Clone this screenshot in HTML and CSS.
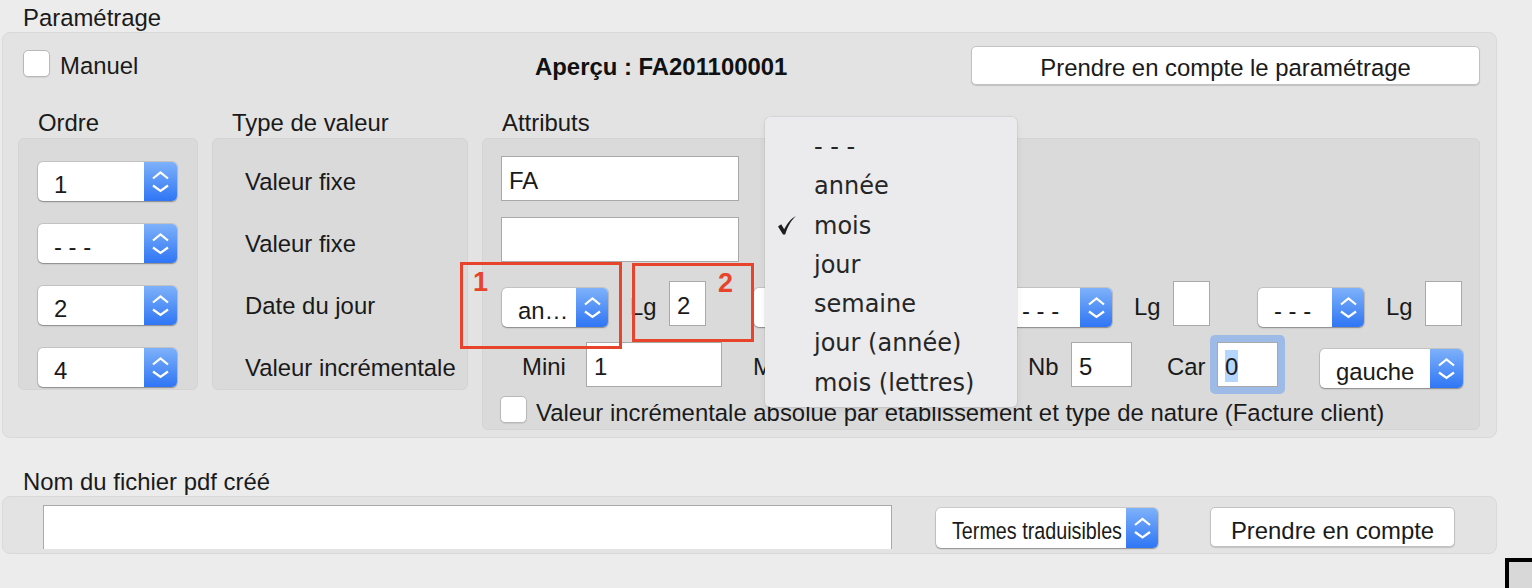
FILE: index.html
```html
<!DOCTYPE html>
<html lang="fr">
<head>
    <meta charset="UTF-8">
    <title>Paramétrage de la numérotation</title>
    <link rel="stylesheet" href="styles.css">
</head>
<body>
    <div class="section-title">Paramétrage</div>
    <div class="panel settings">
        <div class="top-row">
            <div class="check-line top-check">
                <span class="checkbox"></span>
                <span class="check-text">Manuel</span>
            </div>
            <div class="preview">Aperçu : FA201100001</div>
            <button class="btn btn-wide">Prendre en compte le paramétrage</button>
        </div>

        <div class="columns">
            <div class="col">
                <div class="col-title">Ordre</div>
                <div class="box box-order">
                    <div class="select sel-order"><span class="select-value">1</span><span class="select-arrows"><svg viewBox="0 0 33 39"><path d="M9 16.5 L16.5 10.5 L24 16.5 M9 23.5 L16.5 29 L24 23.5"/></svg></span></div>
                    <div class="select sel-order"><span class="select-value">- - -</span><span class="select-arrows"><svg viewBox="0 0 33 39"><path d="M9 16.5 L16.5 10.5 L24 16.5 M9 23.5 L16.5 29 L24 23.5"/></svg></span></div>
                    <div class="select sel-order"><span class="select-value">2</span><span class="select-arrows"><svg viewBox="0 0 33 39"><path d="M9 16.5 L16.5 10.5 L24 16.5 M9 23.5 L16.5 29 L24 23.5"/></svg></span></div>
                    <div class="select sel-order"><span class="select-value">4</span><span class="select-arrows"><svg viewBox="0 0 33 39"><path d="M9 16.5 L16.5 10.5 L24 16.5 M9 23.5 L16.5 29 L24 23.5"/></svg></span></div>
                </div>
            </div>

            <div class="col">
                <div class="col-title">Type de valeur</div>
                <div class="box box-type">
                    <div class="type-label">Valeur fixe</div>
                    <div class="type-label">Valeur fixe</div>
                    <div class="type-label">Date du jour</div>
                    <div class="type-label">Valeur incrémentale</div>
                </div>
            </div>

            <div class="col">
                <div class="col-title">Attributs</div>
                <div class="box box-attr">
                    <div class="field field-wide first">FA</div>
                    <div class="field field-wide second"></div>

                    <div class="attr-row date-row">
                        <div class="len-group first-group">
                            <div class="select sel-date"><span class="select-value">an…</span><span class="select-arrows"><svg viewBox="0 0 33 39"><path d="M9 16.5 L16.5 10.5 L24 16.5 M9 23.5 L16.5 29 L24 23.5"/></svg></span></div>
                            <span class="lbl lg">Lg</span>
                            <div class="field field-len">2</div>
                        </div>
                        <!-- this one is open: its menu is drawn over it -->
                        <div class="len-group">
                            <div class="select sel-date"><span class="select-value"></span><span class="select-arrows"><svg viewBox="0 0 33 39"><path d="M9 16.5 L16.5 10.5 L24 16.5 M9 23.5 L16.5 29 L24 23.5"/></svg></span></div>
                            <span class="lbl lg"></span>
                            <div class="field field-len"></div>
                        </div>
                        <div class="len-group">
                            <div class="select sel-date"><span class="select-value">- - -</span><span class="select-arrows"><svg viewBox="0 0 33 39"><path d="M9 16.5 L16.5 10.5 L24 16.5 M9 23.5 L16.5 29 L24 23.5"/></svg></span></div>
                            <span class="lbl lg">Lg</span>
                            <div class="field field-len"></div>
                        </div>
                        <div class="len-group">
                            <div class="select sel-date"><span class="select-value">- - -</span><span class="select-arrows"><svg viewBox="0 0 33 39"><path d="M9 16.5 L16.5 10.5 L24 16.5 M9 23.5 L16.5 29 L24 23.5"/></svg></span></div>
                            <span class="lbl lg">Lg</span>
                            <div class="field field-len"></div>
                        </div>
                    </div>

                    <div class="attr-row incr-row">
                        <span class="lbl lbl-mini">Mini</span>
                        <div class="field field-num">1</div>
                        <span class="lbl lbl-maxi">Maxi</span>
                        <div class="field field-num"></div>
                        <span class="lbl lbl-nb">Nb</span>
                        <div class="field field-small">5</div>
                        <span class="lbl lbl-car">Car</span>
                        <div class="focus-ring">
                            <div class="field field-small"><span class="text-selected">0</span></div>
                        </div>
                        <div class="select sel-align"><span class="select-value">gauche</span><span class="select-arrows"><svg viewBox="0 0 33 39"><path d="M9 16.5 L16.5 10.5 L24 16.5 M9 23.5 L16.5 29 L24 23.5"/></svg></span></div>
                    </div>

                    <div class="check-line attr-check">
                        <span class="checkbox"></span>
                        <span class="check-text">Valeur incrémentale absolue par établissement et type de nature (Facture client)</span>
                    </div>
                </div>
            </div>
        </div>

        <!-- open menu of the second date select -->
        <div class="popup">
            <div class="popup-item">- - -</div>
            <div class="popup-item">année</div>
            <div class="popup-item checked">
                <svg class="check-mark" viewBox="0 0 18 19"><path d="M0 10.5 L3.2 8.3 L6.2 13.3 C9 7.5 13 2.5 18 0 C13.5 4 9.8 10 7.2 18.5 L5 18.5 Z"/></svg>
                mois
            </div>
            <div class="popup-item">jour</div>
            <div class="popup-item">semaine</div>
            <div class="popup-item">jour (année)</div>
            <div class="popup-item">mois (lettres)</div>
        </div>

        <div class="mark mark-1"><span class="mark-num">1</span></div>
        <div class="mark mark-2"><span class="mark-num">2</span></div>
    </div>

    <div class="section-title second-title">Nom du fichier pdf créé</div>
    <div class="panel files">
        <div class="field file-name"></div>
        <div class="select sel-terms"><span class="select-value"><span class="squeeze">Termes traduisibles</span></span><span class="select-arrows"><svg viewBox="0 0 33 39"><path d="M9 16.5 L16.5 10.5 L24 16.5 M9 23.5 L16.5 29 L24 23.5"/></svg></span></div>
        <button class="btn btn-apply">Prendre en compte</button>
    </div>

    <div class="corner"></div>
</body>
</html>
```

FILE: styles.css
```css
body {
    margin: 0;
    width: 1532px;
    height: 588px;
    overflow: hidden;
    background-color: #ececec;
    font-family: "Liberation Sans", Arial, sans-serif;
    font-size: 23.9px;
    color: #1a1a1a;
}
.section-title {
    height: 27px;
    padding: 5px 0 0 23px;
    line-height: 26px;
}
.second-title {
    margin-top: 26px;
}
.panel {
    position: relative;
    box-sizing: border-box;
    width: 1495px;
    margin-left: 2px;
    background-color: #e3e3e3;
    border: 1px solid #d9d9d9;
    border-radius: 8px;
}
.settings {
    height: 406px;
}

/* top line: manual checkbox, preview, apply button */
.top-row {
    display: grid;
    grid-template-columns: 512px 436px 509px;
    height: 52px;
    padding: 0 16px 0 20px;
}
.check-line {
    display: flex;
    align-items: flex-start;
}
.checkbox {
    flex: none;
    box-sizing: border-box;
    width: 27px;
    height: 27px;
    background-color: white;
    border: 1px solid #b8b8b8;
    border-radius: 5px;
    box-shadow: 0 1px 1px rgba(0, 0, 0, 0.08);
}
.check-text {
    line-height: 26px;
    white-space: nowrap;
}
.top-check .checkbox {
    margin-top: 17px;
}
.top-check .check-text {
    margin: 20px 0 0 10px;
}
.preview {
    margin-top: 21px;
    line-height: 26px;
    font-weight: bold;
    color: #111;
}
.btn {
    box-sizing: border-box;
    background-color: white;
    border: 1px solid #c2c2c2;
    border-radius: 5px;
    box-shadow: 0 1px 1px rgba(0, 0, 0, 0.15);
    font: inherit;
    color: inherit;
    text-align: center;
    line-height: 26px;
    padding: 0;
}
.btn-wide {
    height: 39px;
    margin-top: 13px;
    padding-top: 5px;
}

/* three columns */
.columns {
    display: flex;
    gap: 14px;
    margin-top: 25px;
    padding-left: 15px;
}
.col-title {
    height: 28px;
    padding-left: 20px;
    line-height: 26px;
}
.box {
    box-sizing: border-box;
    background-color: #dadada;
    border: 1px solid #d4d4d4;
    border-radius: 6px;
    overflow: hidden;
}
.box-order {
    display: flex;
    flex-direction: column;
    gap: 23px;
    width: 180px;
    height: 252px;
    padding: 23px 0 0 19px;
}
.box-type {
    display: flex;
    flex-direction: column;
    gap: 23px;
    width: 256px;
    height: 252px;
    padding: 23px 0 0 32px;
}
.type-label {
    height: 39px;
    line-height: 40px;
    white-space: nowrap;
}
.box-attr {
    width: 998px;
    height: 292px;
    padding: 17px 0 0 18px;
    overflow: visible;
}

/* select with blue stepper */
.select {
    display: flex;
    box-sizing: border-box;
    height: 39px;
    background-color: white;
    border-radius: 5px;
    box-shadow: 0 0 0 1px rgba(0, 0, 0, 0.1), 0 1px 1.5px rgba(0, 0, 0, 0.3);
    overflow: hidden;
    flex: none;
}
.select-value {
    flex: 1;
    padding: 7px 0 0 16px;
    line-height: 32px;
    white-space: nowrap;
    overflow: hidden;
}
.select-arrows {
    flex: none;
    width: 33px;
    background: linear-gradient(#7eb1fa, #2f76f5);
}
.select-arrows svg {
    display: block;
    width: 33px;
    height: 100%;
}
.select-arrows path {
    fill: none;
    stroke: white;
    stroke-width: 2.2;
}
.sel-order {
    width: 139px;
}
.sel-date {
    width: 106px;
}
.sel-date .select-arrows {
    width: 32px;
}
.sel-align {
    width: 143px;
    margin-left: 35px;
    margin-bottom: -1px;
}
.sel-terms {
    width: 222px;
    height: 40px;
    margin: 11px 0 0 44px;
}
.sel-terms .select-arrows {
    width: 32px;
}
.squeeze {
    display: inline-block;
    transform: scaleX(0.826);
    transform-origin: 0 50%;
}

/* text fields */
.field {
    flex: none;
    box-sizing: border-box;
    height: 45px;
    padding: 9px 7px 0;
    line-height: 30px;
    background-color: white;
    border: 1px solid #a9a9a9;
    white-space: nowrap;
    overflow: hidden;
}
.field-wide {
    width: 238px;
}
.field-wide.first {
    margin-bottom: 16px;
}
.field-wide.second {
    margin-bottom: 19px;
}
.field-len {
    width: 37px;
    margin-bottom: 1px;
}
.field-num {
    width: 136px;
}
.field-small {
    width: 61px;
}
.text-selected {
    background-color: #b4d5fe;
    padding: 3px 0 2px;
}
.focus-ring {
    flex: none;
    margin: -7px 0;
    padding: 7px;
    background-color: #9dbbe6;
    border-radius: 5px;
}

.attr-row {
    display: flex;
    align-items: flex-end;
}
.date-row {
    height: 46px;
    margin-bottom: 15px;
}
.len-group {
    display: flex;
    align-items: flex-end;
    flex: none;
    width: 252px;
}
.first-group {
    margin-left: 1px;
}
.lbl {
    flex: none;
    box-sizing: border-box;
    height: 45px;
    padding-top: 10px;
    line-height: 30px;
    white-space: nowrap;
}
.lg {
    width: 26px;
    margin: 0 13px 0 22px;
}
.incr-row {
    height: 45px;
    margin-bottom: 9px;
}
.lbl-mini {
    width: 64px;
    margin-left: 21px;
}
.lbl-maxi {
    width: 70px;
    margin-left: 31px;
}
.lbl-nb {
    width: 43px;
    margin-left: 69px;
}
.lbl-car {
    width: 43px;
    margin-left: 35px;
}
.attr-check .checkbox {
    margin-left: -1px;
}
.attr-check .check-text {
    margin: 4px 0 0 9px;
}

/* dropdown menu */
.popup {
    position: absolute;
    left: 762px;
    top: 84px;
    box-sizing: border-box;
    width: 252px;
    height: 290px;
    padding-top: 10px;
    background-color: #ebebed;
    border-radius: 5px;
    box-shadow: 0 0 0 0.5px rgba(0, 0, 0, 0.1), 0 3px 8px rgba(0, 0, 0, 0.06);
    font-family: "DejaVu Sans", sans-serif;
    font-size: 24px;
    color: #262626;
}
.popup-item {
    position: relative;
    height: 39.3px;
    line-height: 40px;
    padding-left: 49px;
    white-space: nowrap;
}
.check-mark {
    position: absolute;
    left: 13px;
    top: 10px;
    width: 18px;
    height: 19px;
    fill: #1e1e1e;
}

/* red annotation frames */
.mark {
    position: absolute;
    box-sizing: border-box;
    border: 3px solid #e8442b;
}
.mark-1 {
    left: 457px;
    top: 229px;
    width: 162px;
    height: 87px;
}
.mark-2 {
    left: 629px;
    top: 230px;
    width: 122px;
    height: 79px;
}
.mark-num {
    position: absolute;
    font-size: 27px;
    line-height: 27px;
    font-weight: bold;
    color: #e8442b;
}
.mark-1 .mark-num {
    left: 10px;
    top: 4px;
}
.mark-2 .mark-num {
    left: 83px;
    top: 4px;
}

/* pdf file name */
.files {
    display: flex;
    align-items: flex-start;
    height: 58px;
    padding-left: 40px;
}
.file-name {
    width: 849px;
    height: 44px;
    margin-top: 8px;
    border-bottom: none;
}
.btn-apply {
    width: 245px;
    height: 40px;
    margin: 10px 0 0 52px;
    padding-top: 7px;
}

.corner {
    width: 40px;
    height: 40px;
    margin: 4px 0 0 1505px;
    background-color: #d8d8d8;
    border: 4px solid #000;
}
```
